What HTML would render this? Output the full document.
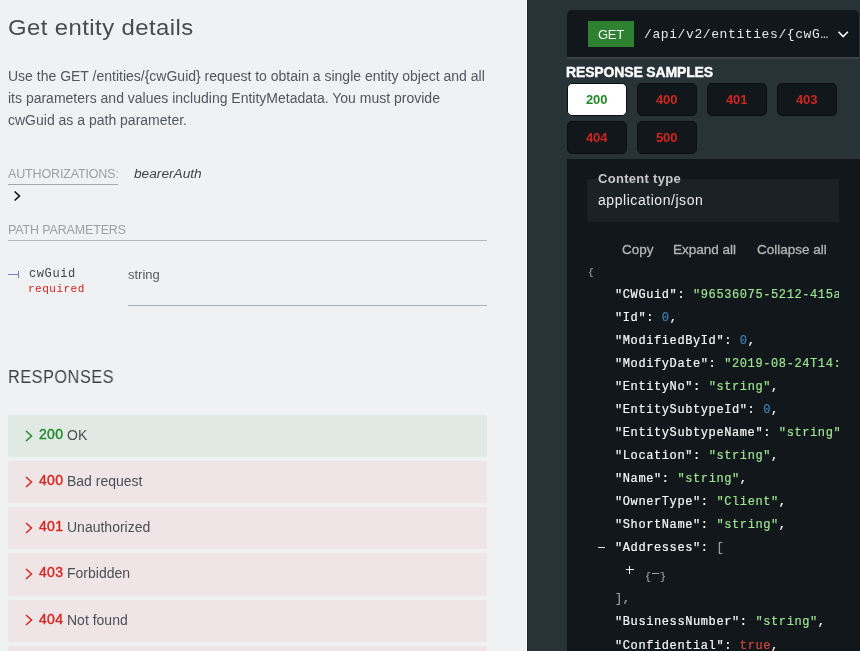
<!DOCTYPE html>
<html><head><meta charset="utf-8">
<style>
*{margin:0;padding:0;box-sizing:border-box}
html,body{width:860px;height:651px;overflow:hidden;background:#f0f1f3}
body{position:relative;font-family:"Liberation Sans",sans-serif}
.a{position:absolute;white-space:nowrap}
.a,h2,.row span,.tab,.j{will-change:transform}
#left{position:absolute;left:0;top:0;width:526px;height:651px;background:#f0f1f3}
#sep{position:absolute;left:526px;top:0;width:1px;height:651px;background:#fff}
#right{position:absolute;left:527px;top:0;width:333px;height:651px;background:#283338;border-left:1px solid #1c262b}
h2{position:absolute;left:8px;top:15px;font-weight:400;font-size:22px;letter-spacing:0.4px;color:#4a4a4a;transform:scaleX(1.085);transform-origin:0 0;white-space:nowrap}
.p{left:8px;font-size:14px;color:#50575f;line-height:22px}
.lbl{font-size:12.5px;color:#9aa0a5;text-transform:uppercase}
.row{position:absolute;left:8px;width:479px;height:42.4px;border-radius:2px}
.row.g{background:#e1e9e4}
.row.r{background:#efe4e6}
.row .chev{position:absolute;left:16px;top:14.5px}
.row .code{position:absolute;left:31px;top:11px;font-size:14px;font-weight:400;letter-spacing:0.3px;-webkit-text-stroke:0.4px}
.row .t{position:absolute;top:12px;font-size:14px;color:#4a4f55}
.mono{font-family:"Liberation Mono",monospace}
.tab{position:absolute;width:59.5px;height:32.5px;margin-top:0.2px;border-radius:5px;background:#11171a;border:1px solid #0b0f11;text-align:center;font-size:13px;font-weight:700;line-height:31.5px;color:#d02620}
.tab.sel{background:#fff;color:#24882b;border-color:#0b0f11}
.j{position:absolute;font-family:"Liberation Mono",monospace;font-size:12px;letter-spacing:0.6px;color:#f8f8f8;white-space:pre;line-height:16px;-webkit-text-stroke:0.2px}
.s{color:#9ee592}
.n{color:#4080b4}
.b{color:#d6473c}
.pn{color:#9ba0a3}
</style></head><body>
<div id="left">
  <h2>Get entity details</h2>
  <div class="a p" style="top:65px">Use the GET /entities/{cwGuid} request to obtain a single entity object and all</div>
  <div class="a p" style="top:87px">its parameters and values including EntityMetadata. You must provide</div>
  <div class="a p" style="top:109px">cwGuid as a path parameter.</div>

  <div class="a lbl" style="left:8px;top:167px;letter-spacing:-0.15px">Authorizations:</div>
  <div class="a" style="left:8px;top:184px;width:110px;height:1px;background:#a3a9ad"></div>
  <div class="a" style="left:134px;top:166px;font-size:13.7px;font-style:italic;color:#3f4348">bearerAuth</div>
  <svg class="a" style="left:12px;top:189px" width="12" height="14" viewBox="0 0 12 14"><path d="M2.6 2.5 L7.4 7 L2.6 11.5" fill="none" stroke="#111" stroke-width="1.65"/></svg>

  <div class="a lbl" style="left:8px;top:223px;letter-spacing:-0.15px">Path parameters</div>
  <div class="a" style="left:8px;top:240px;width:479px;height:1px;background:#b2b8bc"></div>

  <div class="a" style="left:8px;top:274px;width:10px;height:1px;background:#7a7fc0"></div>
  <div class="a" style="left:18px;top:271px;width:1px;height:7px;background:#7a7fc0"></div>
  <div class="a mono" style="left:29px;top:267px;font-size:12px;letter-spacing:0.6px;color:#444">cwGuid</div>
  <div class="a mono" style="left:28px;top:283px;font-size:11px;letter-spacing:0.5px;color:#d4231d">required</div>
  <div class="a" style="left:128px;top:267px;font-size:13px;color:#555a5f">string</div>
  <div class="a" style="left:128px;top:305px;width:359px;height:1px;background:#9fb1bd"></div>

  <div class="a" style="left:8px;top:367px;font-size:18px;color:#3f3f3f;letter-spacing:0.65px;transform:scaleX(0.9);transform-origin:0 0">RESPONSES</div>

  <div class="row g" style="top:415px">
    <svg class="chev" width="10" height="12" viewBox="0 0 10 12"><path d="M2 1 L7.5 6 L2 11" fill="none" stroke="#1f8a2b" stroke-width="1.5"/></svg>
    <span class="code" style="color:#1f8a2b">200</span><span class="t" style="left:59px">OK</span>
  </div>
  <div class="row r" style="top:461px">
    <svg class="chev" width="10" height="12" viewBox="0 0 10 12"><path d="M2 1 L7.5 6 L2 11" fill="none" stroke="#d6261f" stroke-width="1.5"/></svg>
    <span class="code" style="color:#d6261f">400</span><span class="t" style="left:59px">Bad request</span>
  </div>
  <div class="row r" style="top:507px">
    <svg class="chev" width="10" height="12" viewBox="0 0 10 12"><path d="M2 1 L7.5 6 L2 11" fill="none" stroke="#d6261f" stroke-width="1.5"/></svg>
    <span class="code" style="color:#d6261f">401</span><span class="t" style="left:59px">Unauthorized</span>
  </div>
  <div class="row r" style="top:553.3px">
    <svg class="chev" width="10" height="12" viewBox="0 0 10 12"><path d="M2 1 L7.5 6 L2 11" fill="none" stroke="#d6261f" stroke-width="1.5"/></svg>
    <span class="code" style="color:#d6261f">403</span><span class="t" style="left:59px">Forbidden</span>
  </div>
  <div class="row r" style="top:599.6px">
    <svg class="chev" width="10" height="12" viewBox="0 0 10 12"><path d="M2 1 L7.5 6 L2 11" fill="none" stroke="#d6261f" stroke-width="1.5"/></svg>
    <span class="code" style="color:#d6261f">404</span><span class="t" style="left:59px">Not found</span>
  </div>
  <div class="row r" style="top:646.3px"></div>
</div>
<div id="sep"></div>
<div id="right">
</div>

<!-- right panel content, page coords -->
<div class="a" style="left:567px;top:10px;width:292px;height:47px;background:#11171a;border-radius:5px 5px 0 0"></div>
<div class="a" style="left:567px;top:57px;width:292px;height:2px;background:#3c454b"></div>
<div class="a" style="left:588px;top:21px;width:46px;height:26px;background:#2f8132;color:#f4f4f4;font-size:13px;letter-spacing:-0.2px;text-align:center;line-height:27px">GET</div>
<div class="a mono" style="left:644px;top:27px;font-size:13px;letter-spacing:0.6px;color:#e6e6e6">/api/v2/entities/{cwG…</div>
<svg class="a" style="left:836px;top:27px" width="15" height="12" viewBox="0 0 15 12"><path d="M2.5 4.8 L7.2 9.5 L11.9 4.8" fill="none" stroke="#fff" stroke-width="1.6"/></svg>

<div class="a" style="left:566px;top:64px;font-size:14px;font-weight:700;letter-spacing:-0.15px;color:#fff;-webkit-text-stroke:0.4px">RESPONSE SAMPLES</div>
<div class="tab sel" style="left:567px;top:83px">200</div>
<div class="tab" style="left:637px;top:83px">400</div>
<div class="tab" style="left:707px;top:83px">401</div>
<div class="tab" style="left:777px;top:83px">403</div>
<div class="tab" style="left:567px;top:121px">404</div>
<div class="tab" style="left:637px;top:121px">500</div>

<div class="a" style="left:567px;top:159px;width:293px;height:492px;background:#11171a"></div>
<div class="a" style="left:587px;top:179px;width:252px;height:43px;background:#1b2226"></div>
<div class="a" style="left:598px;top:171px;font-size:13px;font-weight:700;letter-spacing:0.3px;color:#c8c8c8">Content type</div>
<div class="a" style="left:598px;top:192px;font-size:14px;letter-spacing:0.55px;color:#ececec">application/json</div>

<div class="a" style="left:622px;top:241.5px;font-size:13.5px;color:#b4b4b4;-webkit-text-stroke:0.3px">Copy</div>
<div class="a" style="left:673px;top:241.5px;font-size:13.5px;color:#b4b4b4;-webkit-text-stroke:0.3px">Expand all</div>
<div class="a" style="left:757px;top:241.5px;font-size:13.5px;color:#b4b4b4;-webkit-text-stroke:0.3px">Collapse all</div>

<div class="a" style="left:567px;top:260px;width:272px;height:391px;overflow:hidden">
<div class="j pn" style="left:21px;top:4.5px;font-size:9.5px">{</div>
<div class="j" style="left:48px;top:27px">"CWGuid": <span class="s">"96536075-5212-415a</span></div>
<div class="j" style="left:48px;top:50px">"Id": <span class="n">0</span>,</div>
<div class="j" style="left:48px;top:73px">"ModifiedById": <span class="n">0</span>,</div>
<div class="j" style="left:48px;top:96px">"ModifyDate": <span class="s">"2019-08-24T14:15:22Z"</span>,</div>
<div class="j" style="left:48px;top:119px">"EntityNo": <span class="s">"string"</span>,</div>
<div class="j" style="left:48px;top:142px">"EntitySubtypeId": <span class="n">0</span>,</div>
<div class="j" style="left:48px;top:165px">"EntitySubtypeName": <span class="s">"string"</span>,</div>
<div class="j" style="left:48px;top:188px">"Location": <span class="s">"string"</span>,</div>
<div class="j" style="left:48px;top:211px">"Name": <span class="s">"string"</span>,</div>
<div class="j" style="left:48px;top:234px">"OwnerType": <span class="s">"Client"</span>,</div>
<div class="j" style="left:48px;top:257px">"ShortName": <span class="s">"string"</span>,</div>
<div class="a" style="left:30.5px;top:287px;width:7px;height:1px;background:#e0e0e0"></div>
<div class="j" style="left:48px;top:280px">"Addresses": <span class="pn">[</span></div>
<div class="a" style="left:58.5px;top:309.2px;width:7.5px;height:1.2px;background:#f0f0f0"></div>
<div class="a" style="left:61.7px;top:306px;width:1.2px;height:7.5px;background:#f0f0f0"></div>
<div class="j pn" style="left:78px;top:310px;font-size:10px;letter-spacing:0">{</div>
<div class="a" style="left:84.5px;top:312.5px;width:7px;height:1px;background:#a0a3a5"></div>
<div class="j pn" style="left:93px;top:310px;font-size:10px;letter-spacing:0">}</div>
<div class="j pn" style="left:48px;top:331px">],</div>
<div class="j" style="left:48px;top:354px">"BusinessNumber": <span class="s">"string"</span>,</div>
<div class="j" style="left:48px;top:377.5px">"Confidential": <span class="b">true</span>,</div>
</div>
</body></html>
